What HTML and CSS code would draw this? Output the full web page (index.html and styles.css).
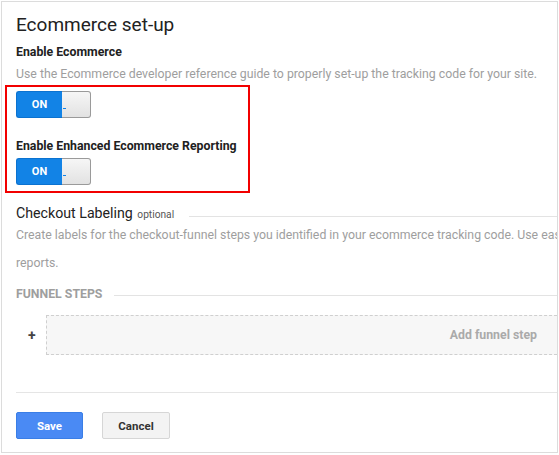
FILE: index.html
```html
<!doctype html>
<html lang="en">
<head>
  <meta charset="utf-8" />
  <title>Ecommerce set-up</title>
  <link rel="stylesheet" href="styles.css">
</head>
<body>
  <div class="panel">
    <h1 class="title">Ecommerce set-up</h1>
    <div class="field-label">Enable Ecommerce</div>
    <p class="hint">Use the Ecommerce developer reference guide to properly set-up the tracking code for your site.</p>

    <div class="highlight">
      <div class="toggle"><span class="toggle-on">ON</span><span class="toggle-knob"></span></div>
      <div class="field-label spaced">Enable Enhanced Ecommerce Reporting</div>
      <div class="toggle tight"><span class="toggle-on">ON</span><span class="toggle-knob"></span></div>
    </div>

    <div class="section-head">
      <span class="section-title">Checkout Labeling <small class="optional">optional</small></span>
      <span class="rule low"></span>
    </div>
    <p class="hint wide">Create labels for the checkout-funnel steps you identified in your ecommerce tracking code. Use easy-to-understand names, as these will appear in your reports.</p>

    <div class="section-head steps-head">
      <span class="caps">Funnel steps</span>
      <span class="rule"></span>
    </div>
    <div class="step-row">
      <span class="plus">+</span>
      <div class="step-box">Add funnel step</div>
    </div>

    <div class="actions">
      <button class="btn btn-primary">Save</button>
      <button class="btn">Cancel</button>
    </div>
  </div>
</body>
</html>
```

FILE: styles.css
```css
html, body { margin:0; padding:0; background:#fff; }
body { font-family:Roboto, "Noto Sans", Arial, sans-serif; color:#212121; }

.panel{
  box-sizing:border-box; width:557px; height:452px; margin:1px;
  border:1px solid #dcdcdc; padding:11px 0 0 14px; overflow:hidden;
}
.title{ margin:0; font-size:19px; line-height:24px; font-weight:400; color:#222; }
.field-label{ margin-top:7px; font-size:12.3px; line-height:16px; font-weight:700; color:#212121; }
.field-label.spaced{ margin-top:20px; }
.hint{ margin:6px 0 0; font-size:12.3px; line-height:16px; color:#9e9e9e; }
.hint.wide{ width:845px; margin-top:0; line-height:28px; }

.highlight{
  box-sizing:border-box; width:245px; margin:3px 0 0 -11px;
  border:2px solid #f20000; padding:4px 0 6px 9px;
}
.toggle{ display:flex; width:75px; height:27px; }
.toggle.tight{ margin-top:4px; }
.toggle-on{
  box-sizing:border-box; width:46px; border:1px solid #0b72d0; border-right:0;
  border-radius:3px 0 0 3px; background:#1283e6;
  color:#fff; font-size:11px; font-weight:700; line-height:25px; text-align:center;
}
.toggle-knob{
  position:relative; flex:1; border:1px solid #9a9a9a; border-left:0;
  border-radius:0 3px 3px 0; background:linear-gradient(#f6f6f6, #e2e2e2);
}
.toggle-knob::after{
  content:""; position:absolute; left:1px; top:16px; width:3px; height:1px; background:#1283e6;
}

.section-head{ display:flex; align-items:center; height:16px; margin-top:12px; }
.section-title{ font-size:14.2px; line-height:16px; color:#222; white-space:nowrap; }
.optional{ margin-left:1px; font-size:10.2px; line-height:0; color:#555; }
.rule{ flex:1; height:1px; margin-left:15px; background:#e3e3e3; }
.rule.low{ margin-top:6px; }
.steps-head{ margin-top:9px; }
.steps-head .rule{ margin-top:2px; margin-left:12px; }
.caps{ font-size:12.3px; line-height:16px; font-weight:700; color:#9e9e9e; text-transform:uppercase; }

.step-row{ display:flex; align-items:center; margin-top:13px; }
.plus{ box-sizing:border-box; width:30px; padding-left:12px; font-size:14px; font-weight:700; color:#444; }
.step-box{
  box-sizing:border-box; flex:1; height:40px; margin-right:-10px; padding-right:29px;
  display:flex; align-items:center; justify-content:flex-end;
  border:1px dashed #cfcfcf; background:#f7f7f7;
  font-size:12.3px; font-weight:700; color:#aaa;
}

.actions{ margin-top:37px; border-top:1px solid #e5e5e5; padding-top:19px; display:flex; gap:19px; }
.btn{
  box-sizing:border-box; width:68px; height:27px; border-radius:2px;
  border:1px solid #d6d6d6; background:#f3f3f3; color:#333;
  font-family:Roboto, Arial, sans-serif; font-size:11.5px; font-weight:700; padding:0;
}
.btn-primary{ width:67px; border-color:#3a7ee6; background:#4a8af4; color:#fff; }
```
